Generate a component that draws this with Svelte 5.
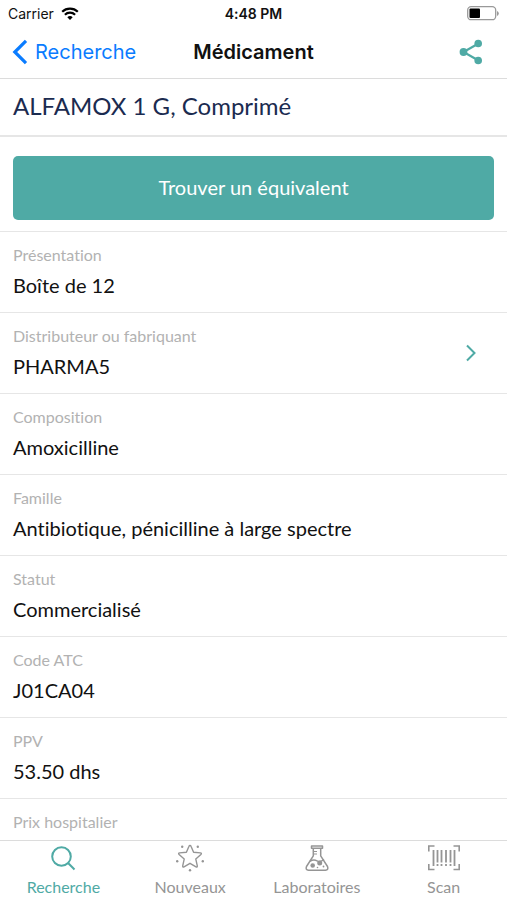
<script>
  const fields = [
    { label: 'Présentation', value: 'Boîte de 12' },
    { label: 'Distributeur ou fabriquant', value: 'PHARMA5', link: true },
    { label: 'Composition', value: 'Amoxicilline' },
    { label: 'Famille', value: 'Antibiotique, pénicilline à large spectre' },
    { label: 'Statut', value: 'Commercialisé' },
    { label: 'Code ATC', value: 'J01CA04' },
    { label: 'PPV', value: '53.50 dhs' },
    { label: 'Prix hospitalier', value: '' },
  ];

  const tabs = [
    { id: 'search', label: 'Recherche' },
    { id: 'new', label: 'Nouveaux' },
    { id: 'labs', label: 'Laboratoires' },
    { id: 'scan', label: 'Scan' },
  ];

  let active = $state('search');
</script>

{#snippet row(f)}
  <span class="text">
    <span class="label">{f.label}</span>
    <span class="value">{f.value}</span>
  </span>
  {#if f.link}
    <svg class="chevron" width="12" height="18" viewBox="0 0 12 18" aria-hidden="true">
      <path d="M2 1.500L9.500 9 2 16.500" />
    </svg>
  {/if}
{/snippet}

{#snippet icon(id)}
  <svg class="tab-icon" width="34" height="30" viewBox="0 0 34 30" aria-hidden="true">
    {#if id === 'search'}
      <g stroke-width="2">
        <circle cx="15.500" cy="13.500" r="9.300" />
        <path d="M22.300 20.300l6.200 6.200" />
      </g>
    {:else if id === 'new'}
      <path
        stroke-width="1.400"
        stroke-linejoin="round"
        d="M17 2.500q.7 0 1 .8l2.600 6 6.800.6q1.700.3.500 1.600l-5.100 4.600 1.500 6.700q.2 1.700-1.300 1L17 20.300l-6 3.500q-1.500.7-1.300-1l1.500-6.700-5.100-4.600q-1.200-1.300.5-1.600l6.800-.6 2.600-6q.3-.8 1-.8z"
      />
      <g class="solid">
        <circle cx="9.200" cy="3.700" r="1.200" />
        <circle cx="24.800" cy="3.700" r="1.200" />
        <circle cx="4.200" cy="18.200" r="1.200" />
        <circle cx="29.800" cy="18.200" r="1.200" />
        <circle cx="17" cy="27.300" r="1.200" />
      </g>
    {:else if id === 'labs'}
      <g stroke-width="1.500" stroke-linejoin="round">
        <path d="M11.500 3h11v2.200h-11zM13.300 5.500v7.300L6.500 23.500q-1.300 3.500 2 3.700h17q3.300-.2 2-3.700l-6.800-10.700V5.500" />
        <path d="M10 18.300q3.500-2.300 7-.5t7-1.300" />
      </g>
      <path stroke-width="1" d="M14 8.500h3M14 11h3" />
      <g class="solid">
        <circle cx="12.700" cy="22.500" r="2.300" />
        <circle cx="19.700" cy="20" r="2.500" />
        <circle cx="17.500" cy="24.500" r=".8" />
        <circle cx="23.500" cy="23.500" r=".9" />
      </g>
    {:else}
      <g stroke-width="1.600">
        <path d="M1.800 8.500V3h5.700M26.500 3h5.700v5.500M32.200 21v5.500h-5.700M7.500 26.500H1.800V21" />
        <path stroke-width="1.800" d="M6.500 7v16M10.500 7v12.500M14.500 7v12.500M19 7v12.500M23.500 7v12.500M27.500 7v16" />
        <path stroke-width="1.800" d="M10.500 21v2M14.500 21v2M19 21v2M23.500 21v2" />
      </g>
    {/if}
  </svg>
{/snippet}

<div class="screen">
  <div class="status">
    <span class="carrier">
      Carrier
      <svg width="18" height="13" viewBox="0 0 18 13" aria-hidden="true">
        <path d="M9 13L6.300 10.200a3.900 3.900 0 0 1 5.400 0z" fill="#000" />
        <path d="M3.900 7.700a7.300 7.300 0 0 1 10.200 0M1.200 4.700a11.200 11.200 0 0 1 15.600 0" fill="none" stroke="#000" stroke-width="2.200" />
      </svg>
    </span>
    <span class="time">4:48 PM</span>
    <svg class="battery" width="32" height="15" viewBox="0 0 32 15" aria-hidden="true">
      <rect x=".7" y=".7" width="28" height="13" rx="3.500" fill="#fff" stroke="#999" stroke-width="1.300" />
      <rect x="2.500" y="2.500" width="10.500" height="9.500" rx="1" fill="#000" />
      <path d="M30 5q1.800.7 1.800 2.500T30 10z" fill="#999" />
    </svg>
  </div>

  <header class="nav">
    <a class="back" href="#recherche">
      <svg width="16" height="26" viewBox="0 0 16 26" aria-hidden="true">
        <path d="M14 1.800L2.800 13 14 24.200" fill="none" stroke="#0a7cff" stroke-width="3.200" />
      </svg>
      Recherche
    </a>
    <h1>Médicament</h1>
    <button class="share" aria-label="Partager">
      <svg width="24" height="26" viewBox="0 0 24 26" aria-hidden="true">
        <path d="M19.500 4.500L4.500 13l15 8.500" fill="none" stroke="#4faaa5" stroke-width="2.200" />
        <g fill="#4faaa5">
          <circle cx="19.200" cy="4.500" r="3.800" />
          <circle cx="4.500" cy="13" r="3.900" />
          <circle cx="19.200" cy="21.500" r="3.800" />
        </g>
      </svg>
    </button>
  </header>

  <main>
    <h2>ALFAMOX 1 G, Comprimé</h2>
    <div class="action">
      <button class="equivalent">Trouver un équivalent</button>
    </div>
    <ul>
      {#each fields as f}
        <li>
          {#if f.link}
            <a class="row" href="#fabriquant">{@render row(f)}</a>
          {:else}
            <div class="row">{@render row(f)}</div>
          {/if}
        </li>
      {/each}
    </ul>
  </main>

  <nav class="tabs">
    {#each tabs as tab}
      <button class="tab" class:active={active === tab.id} onclick={() => (active = tab.id)}>
        {@render icon(tab.id)}
        {tab.label}
      </button>
    {/each}
  </nav>
</div>

<style>
  :global(body) { background: #fff; }

  .screen {
    display: flex; flex-direction: column; height: 100vh;
    font-family: Lato, "Open Sans", sans-serif; color: #111;
    font-variant-ligatures: none;
  }
  button { font: inherit; font-variant-ligatures: none; border: none; background: none; padding: 0; cursor: pointer; }
  a { color: inherit; text-decoration: none; }
  svg { display: block; flex: none; }

  .status {
    display: grid; grid-template-columns: 1fr auto 1fr; align-items: center;
    height: 26px; padding: 0 8px;
    font-family: Inter, sans-serif; font-size: 14px;
  }
  .carrier { display: flex; align-items: center; gap: 7px; }
  .time { font-weight: 600; }
  .battery { justify-self: end; }

  .nav {
    display: grid; grid-template-columns: 1fr auto 1fr; align-items: center;
    height: 52px; padding: 0 12px; border-bottom: 1px solid #dcdcdc;
    font-family: Inter, sans-serif; font-size: 20px;
  }
  .back { display: flex; align-items: center; gap: 7px; color: #0a7cff; }
  h1 { margin: 0; font-size: 20px; font-weight: 600; }
  .share { justify-self: end; padding-right: 12px; }

  main { flex: 1; min-height: 0; overflow: hidden auto; scrollbar-width: none; }
  h2 {
    margin: 0; padding: 0 13px 2px; line-height: 54px;
    border-bottom: 2px solid #e6e6e6;
    font-size: 24px; font-weight: 400; color: #1b2b50;
  }
  .action { padding: 19px 13px 11px; }
  .equivalent {
    display: block; width: 100%; height: 64px; padding-bottom: 2px; border-radius: 5px;
    background: #4faaa5; color: #fff; font-size: 20px;
  }

  ul { list-style: none; margin: 0; padding: 0; }
  li { border-top: 1px solid #e6e6e6; }
  .row {
    display: flex; align-items: center; justify-content: space-between;
    height: 80px; padding: 0 30px 0 13px;
  }
  .text { display: flex; flex-direction: column; gap: 6px; }
  .label { font-size: 16px; line-height: 20px; color: #b2b2b2; }
  .value { font-size: 20px; line-height: 28px; min-height: 28px; }
  .chevron path { fill: none; stroke: #4faaa5; stroke-width: 2; }

  .tabs { display: flex; height: 59px; border-top: 1px solid #dcdcdc; background: #fff; }
  .tab {
    flex: 1; display: flex; flex-direction: column; align-items: center; gap: 4px;
    padding-top: 2px; font-size: 16px; line-height: 20px; color: #959595;
  }
  .tab.active { color: #4faaa5; }
  .tab-icon { fill: none; stroke: currentColor; }
  .solid { fill: currentColor; stroke: none; }
</style>
